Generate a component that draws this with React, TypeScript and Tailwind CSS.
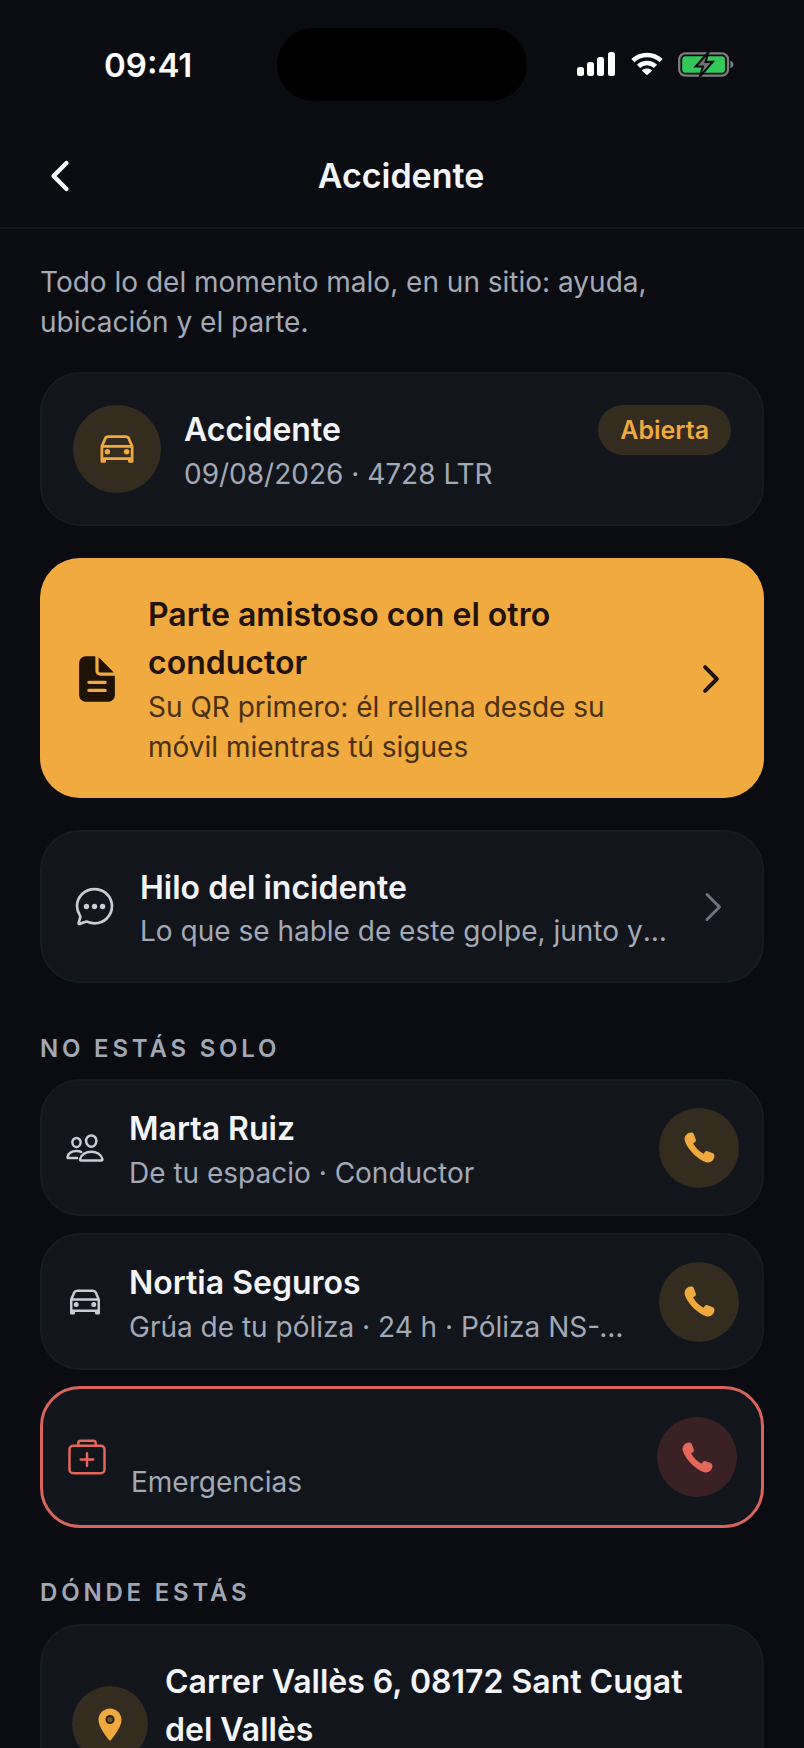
import React from "react";
import {
  IoCarOutline,
  IoChatbubbleEllipsesOutline,
  IoChevronBack,
  IoChevronForward,
  IoDocumentText,
  IoMedkitOutline,
  IoPeopleOutline,
} from "react-icons/io5";

const StatusIcons = () => (
  <div className="flex items-center gap-[15px]">
    {/* Signal */}
    <svg width="40" height="26" viewBox="0 0 40 26" fill="#fff">
      <rect x="1" y="16" width="7" height="9" rx="2.5" />
      <rect x="11" y="11" width="7" height="14" rx="2.5" />
      <rect x="21" y="6" width="7" height="19" rx="2.5" />
      <rect x="32" y="1" width="7" height="24" rx="2.5" />
    </svg>
    {/* Wifi */}
    <svg width="32" height="26" viewBox="0 0 34 26" fill="none" stroke="#fff" strokeWidth="4.8">
      <path d="M2 9.5C10.5 1.5 23.5 1.5 32 9.5" />
      <path d="M8 15.5C13 10.8 21 10.8 26 15.5" />
      <path d="M17 25L11.5 19.8C14.5 17.2 19.5 17.2 22.5 19.8Z" fill="#fff" stroke="none" />
    </svg>
    {/* Battery */}
    <svg width="56" height="27" viewBox="0 0 54 26" fill="none">
      <rect x="1.2" y="2.2" width="47" height="21.6" rx="6" stroke="#7c7f80" strokeWidth="2.2" />
      <rect x="4" y="5" width="41.4" height="16" rx="3.5" fill="#34c759" />
      <path d="M50.5 9.5C52.5 10 53.4 11.4 53.4 13C53.4 14.6 52.5 16 50.5 16.5Z" fill="#7c7f80" />
      <path d="M29.5 1L17 15H24L21 25L33.5 10.5H26.5Z" fill="#6f7272" stroke="#0a0c12" strokeWidth="2" />
    </svg>
  </div>
);

const PhoneIcon = ({ className }: { className: string }) => (
  <svg width="31" height="31" viewBox="0 0 30 30" fill="currentColor" className={className}>
    <path d="M2.2 2.6C3.4 1.3 6 .3 7.6.6 8.6.8 9.3 1.6 9.7 2.6L11.4 7.2C11.8 8.3 11.4 9.4 10.4 10L8.9 11C10.6 14.8 14.9 19.2 19 21L20 19.6C20.6 18.6 21.7 18.2 22.8 18.6L27.4 20.3C28.4 20.7 29.2 21.4 29.4 22.4 29.7 24 28.7 26.6 27.4 27.8 25.8 29.3 23.6 29.8 21.5 29.2 13.5 27 3 16.5.8 8.5.2 6.4.7 4.2 2.2 2.6Z" />
  </svg>
);

const PinIcon = () => (
  <svg width="24" height="33" viewBox="0 0 24 33" className="text-[#f0a93f]">
    <path
      fill="currentColor"
      d="M12 .5C5.6.5.5 5.5.5 11.8.5 19 8 28 10.7 31.8 11.3 32.7 12.7 32.7 13.3 31.8 16 28 23.5 19 23.5 11.8 23.5 5.5 18.4.5 12 .5Z"
    />
    <circle cx="12" cy="11.5" r="3.6" fill="#6b5530" stroke="#2a2118" strokeWidth="2" />
  </svg>
);

const Card = ({ className, children }: { className: string; children: React.ReactNode }) => (
  <div className={`mx-10 flex items-center rounded-[40px] border-2 bg-[#12151c] ${className}`}>{children}</div>
);

const CallButton = ({ red }: { red?: boolean }) => (
  <div
    className={`flex h-20 w-20 shrink-0 items-center justify-center rounded-full ${
      red ? "bg-[#3a2224]" : "bg-[#342c1e]"
    }`}
  >
    <PhoneIcon className={red ? "text-[#e5675a]" : "text-[#f0a93f]"} />
  </div>
);

const SectionLabel = ({ children, className }: { children: React.ReactNode; className: string }) => (
  <div className={`mx-10 text-[24px] leading-[32px] font-semibold tracking-[3.8px] text-[#a1a7b4] ${className}`}>
    {children}
  </div>
);

const ContactRow = ({
  icon,
  name,
  detail,
  className,
}: {
  icon: React.ReactNode;
  name: string;
  detail: string;
  className: string;
}) => (
  <Card className={`h-[137px] border-[#171b22] pr-[23px] pl-[23px] ${className}`}>
    <div className="flex w-[62px] shrink-0 justify-start">{icon}</div>
    <div className="mt-[5px] ml-[2px] min-w-0 flex-1 pr-6">
      <div className="text-[32px] leading-[44px] font-semibold text-[#f4f5f8]">{name}</div>
      <div className="mt-[2px] truncate text-[28px] leading-[40px] text-[#a3a9b6]">{detail}</div>
    </div>
    <CallButton />
  </Card>
);

export default function App() {
  return (
    <div className="h-[1748px] w-[804px] overflow-hidden bg-[#0a0c12] font-['Inter',sans-serif]">
      {/* Status bar */}
      <div className="relative flex h-[128px] items-center justify-between pr-[70px] pl-[104px]">
        <span className="mt-[4px] text-[33px] font-semibold text-white">09:41</span>
        <div className="absolute top-[28px] left-[277px] h-[73px] w-[250px] rounded-[37px] bg-black" />
        <StatusIcons />
      </div>

      {/* Nav bar */}
      <div className="relative flex h-[101px] items-center justify-center border-b-2 border-[#14171e] pb-[4px]">
        <IoChevronBack size={46} className="absolute top-[25px] left-[37px] text-white" />
        <span className="mr-[2px] text-[34px] font-semibold text-[#f4f5f8]">Accidente</span>
      </div>

      <p className="mx-10 mt-[33px] text-[28px] leading-[40px] text-[#a3a9b6]">
        Todo lo del momento malo, en un sitio: ayuda, ubicación y el parte.
      </p>

      {/* Summary */}
      <Card className="mt-[30px] h-[154px] items-start border-[#171b22] pt-[31px] pr-[31px] pl-[31px]">
        <div className="flex h-[88px] w-[88px] shrink-0 items-center justify-center rounded-full bg-[#342c1e]">
          <IoCarOutline size={44} className="text-[#f0a93f]" />
        </div>
        <div className="mt-[3px] ml-[23px] min-w-0 flex-1">
          <div className="text-[32px] leading-[44px] font-semibold text-[#f4f5f8]">Accidente</div>
          <div className="mt-[2px] text-[28px] leading-[40px] text-[#a3a9b6]">09/08/2026 · 4728 LTR</div>
        </div>
        <div className="flex h-[50px] items-center rounded-full bg-[#342c1e] px-[22px] pt-[1px] text-[25px] font-semibold text-[#f0a93f]">
          Abierta
        </div>
      </Card>

      {/* Friendly report */}
      <div className="mx-10 mt-8 flex h-[240px] items-center rounded-[40px] bg-[#f1aa3f] pt-[2px] pr-8 pl-[31px] text-[#1f1305]">
        <IoDocumentText size={52} className="shrink-0" />
        <div className="ml-[25px] min-w-0 flex-1">
          <div className="text-[32px] leading-[48px] font-semibold">Parte amistoso con el otro conductor</div>
          <div className="text-[28px] leading-[40px] text-[#4a300c]">
            Su QR primero: él rellena desde su móvil mientras tú sigues
          </div>
        </div>
        <IoChevronForward size={42} className="ml-[22px] shrink-0" />
      </div>

      {/* Thread */}
      <Card className="mt-8 h-[153px] border-[#171b22] pr-[28px] pl-[31px]">
        <IoChatbubbleEllipsesOutline size={43} className="shrink-0 text-[#c7ccd6]" />
        <div className="mt-[4px] ml-[24px] min-w-0 flex-1">
          <div className="text-[32px] leading-[44px] font-semibold text-[#f4f5f8]">Hilo del incidente</div>
          <div className="mt-[1px] truncate text-[28px] leading-[40px] text-[#a3a9b6]">
            Lo que se hable de este golpe, junto y seguido
          </div>
        </div>
        <svg
          width="42"
          height="42"
          viewBox="0 0 42 42"
          fill="none"
          stroke="#6e7480"
          strokeWidth="3"
          strokeLinecap="round"
          strokeLinejoin="round"
          className="ml-[19px] shrink-0"
        >
          <path d="M15 8.5L27.5 21L15 33.5" />
        </svg>
      </Card>

      <SectionLabel className="mt-[50px]">NO ESTÁS SOLO</SectionLabel>

      <ContactRow
        className="mt-[14px]"
        icon={<IoPeopleOutline size={40} className="text-[#c7ccd6]" />}
        name="Marta Ruiz"
        detail="De tu espacio · Conductor"
      />
      <ContactRow
        className="mt-[17px]"
        icon={<IoCarOutline size={40} className="text-[#c7ccd6]" />}
        name="Nortia Seguros"
        detail="Grúa de tu póliza · 24 h · Póliza NS-2026-88412"
      />

      {/* Emergencies */}
      <Card className="mt-4 h-[142px] border-[3px] border-[#d9655a] pr-[24px] pl-[24px]">
        <IoMedkitOutline size={40} className="shrink-0 text-[#e5675a]" />
        <div className="ml-[24px] min-w-0 flex-1 pr-6">
          <div className="h-[49px]" />
          <div className="text-[28px] leading-[40px] text-[#a3a9b6]">Emergencias</div>
        </div>
        <CallButton red />
      </Card>

      <SectionLabel className="mt-[49px]">DÓNDE ESTÁS</SectionLabel>

      {/* Location */}
      <Card className="mt-[15px] h-[200px] border-[#171b22] px-[30px]">
        <div className="flex h-[76px] w-[76px] shrink-0 items-center justify-center rounded-full bg-[#342c1e]">
          <PinIcon />
        </div>
        <div className="ml-[17px] min-w-0 flex-1 self-start pt-[32px] text-[32px] leading-[48px] font-semibold text-[#f4f5f8]">
          Carrer Vallès 6, 08172 Sant Cugat del Vallès
        </div>
      </Card>
    </div>
  );
}
